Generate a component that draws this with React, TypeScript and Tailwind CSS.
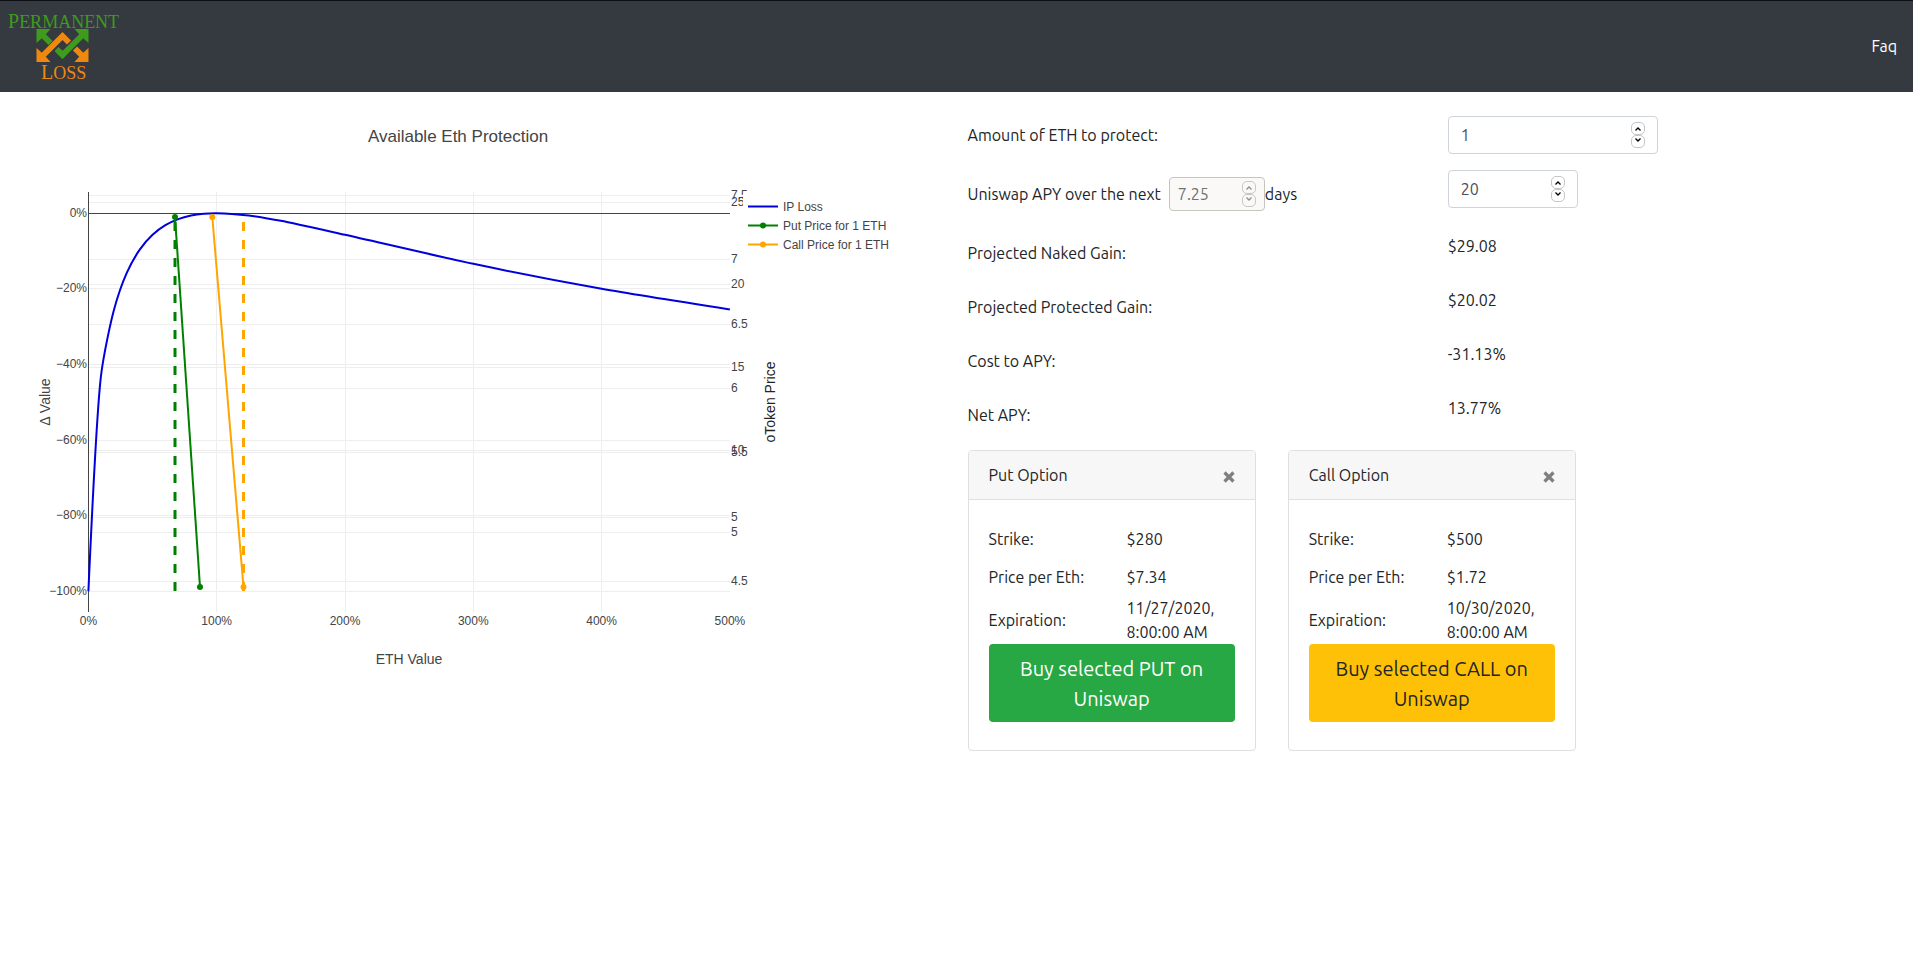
import { useState } from "react";

type Point = [number, number];

const PLOT = { left: 88, right: 730, top: 192, bottom: 612 };
const xAt = (ratio: number) => 88.4 + ratio * 128.3;
const yAt = (value: number) => 213.2 - value * 378;
const pixelCentre = (v: number) => Math.floor(v) + 0.5;

const LEFT_TICKS = [0, -0.2, -0.4, -0.6, -0.8, -1];
const BOTTOM_TICKS = [0, 1, 2, 3, 4, 5];
const PUT_TICKS = [
  { label: "7.5", y: 195 },
  { label: "7", y: 259 },
  { label: "6.5", y: 324 },
  { label: "6", y: 388 },
  { label: "5.5", y: 452 },
  { label: "5", y: 517 },
  { label: "4.5", y: 581 },
];
const CALL_TICKS = [
  { label: "25", y: 202 },
  { label: "20", y: 284 },
  { label: "15", y: 367 },
  { label: "10", y: 450 },
  { label: "5", y: 532 },
];

const LOSS_RATIOS = [0, 0.1, 0.2, 0.3, 0.4, 0.5, 0.6, 0.7, 0.8, 0.9, 1, 1.25, 1.5, 2, 3, 4, 5];
const LOSS_POINTS: Point[] = LOSS_RATIOS.map((r) => [xAt(r), yAt((2 * Math.sqrt(r)) / (1 + r) - 1)]);
const SMOOTHING = 0.7;

// Centripetal Catmull-Rom control points on either side of a vertex.
function tangents(prev: Point, here: Point, next: Point): [Point, Point] {
  const d1 = [prev[0] - here[0], prev[1] - here[1]];
  const d2 = [next[0] - here[0], next[1] - here[1]];
  const a = Math.pow(d1[0] * d1[0] + d1[1] * d1[1], 0.25);
  const b = Math.pow(d2[0] * d2[0] + d2[1] * d2[1], 0.25);
  const nx = (b * b * d1[0] - a * a * d2[0]) * SMOOTHING;
  const ny = (b * b * d1[1] - a * a * d2[1]) * SMOOTHING;
  const before = 3 * b * (a + b);
  const after = 3 * a * (a + b);
  return [
    [here[0] + nx / before, here[1] + ny / before],
    [here[0] - nx / after, here[1] - ny / after],
  ];
}

function smoothPath(pts: Point[]) {
  const t = pts.slice(1, -1).map((p, i) => tangents(pts[i], p, pts[i + 2]));
  let d = `M${pts[0]}Q${t[0][0]} ${pts[1]}`;
  for (let i = 1; i < t.length; i++) d += `C${t[i - 1][1]} ${t[i][0]} ${pts[i + 1]}`;
  return d + `Q${t[t.length - 1][1]} ${pts[pts.length - 1]}`;
}

const percent = (v: number) => `${v < 0 ? "−" : ""}${Math.round(Math.abs(v) * 100)}%`;

function Logo() {
  return (
    <svg viewBox="0 0 124 84" className="h-[84px] w-[124px]" role="img" aria-label="Permanent Loss">
      <g fontFamily="'Liberation Serif', serif">
        <text x="8" y="23" fontSize="20" fill="#3f9a1d">
          P<tspan fontSize="18">ERMANENT</tspan>
        </text>
        <text x="41" y="74" fontSize="20" fill="#ee880f">
          L<tspan fontSize="18">OSS</tspan>
        </text>
      </g>
      <g transform="translate(36.5 24)" fill="none" strokeLinejoin="miter">
        <path d="M5 5L26 26L47 5" stroke="#3f9a1d" strokeWidth="5.8" />
        <path d="M4 30L26 8L30 12" stroke="#343a40" strokeWidth="8.500" />
        <path d="M5 28L26 7L47 28" stroke="#ee880f" strokeWidth="5.8" />
        <path d="M29 23L45 7" stroke="#343a40" strokeWidth="8.500" />
        <path d="M22 22L26 26L47 5" stroke="#3f9a1d" strokeWidth="5.8" />
        <path d="M0 0H14L10 4.5L4.5 10L0 14Z" fill="#3f9a1d" />
        <path d="M52 0H38L42 4.5L47.500 10L52 14Z" fill="#3f9a1d" />
        <path d="M0 33H14L10 28.500L4.500 23L0 19Z" fill="#ee880f" />
        <path d="M52 33H38L42 28.500L47.500 23L52 19Z" fill="#ee880f" />
      </g>
    </svg>
  );
}

function ProtectionChart() {
  return (
    <svg
      viewBox="0 92 956 608"
      className="block w-full max-w-[956px]"
      fontFamily="'Liberation Sans', Arial, sans-serif"
      fontSize="12"
      fill="#444"
      role="img"
      aria-label="Available Eth Protection"
    >
      <text x="458" y="142" fontSize="17" textAnchor="middle">Available Eth Protection</text>

      <g stroke="#eee" strokeWidth="1" shapeRendering="crispEdges">
        {BOTTOM_TICKS.slice(1, 5).map((t) => (
          <line key={t} x1={pixelCentre(xAt(t))} x2={pixelCentre(xAt(t))} y1={PLOT.top} y2={PLOT.bottom} />
        ))}
        {[...LEFT_TICKS.slice(1).map(yAt), ...PUT_TICKS.map((t) => t.y), ...CALL_TICKS.map((t) => t.y)].map((y) => (
          <line key={y} x1={PLOT.left} x2={PLOT.right} y1={pixelCentre(y)} y2={pixelCentre(y)} />
        ))}
      </g>
      <rect x="88" y="192" width="1" height="420" />
      <rect x="88" y="213" width="642" height="1" />

      <path d={smoothPath(LOSS_POINTS)} fill="none" stroke="#0000dd" strokeWidth="2" />
      <path d="M175 591V213" stroke="#008000" strokeWidth="3" strokeDasharray="9 9" />
      <path d="M243.500 591V213" stroke="#ffa500" strokeWidth="3" strokeDasharray="9 9" />
      <path d="M175 217L200 587" stroke="#008000" strokeWidth="2" />
      <path d="M212.300 217L243.500 587" stroke="#ffa500" strokeWidth="2" />
      <g fill="#008000">
        <circle cx="175" cy="217" r="3" />
        <circle cx="200" cy="587" r="3" />
      </g>
      <g fill="#ffa500">
        <circle cx="212.300" cy="217" r="3" />
        <circle cx="243.500" cy="587" r="3" />
      </g>

      <g textAnchor="end">
        {LEFT_TICKS.map((t) => (
          <text key={t} x="87" y={Math.floor(yAt(t)) + 4}>{percent(t)}</text>
        ))}
      </g>
      <g textAnchor="middle">
        {BOTTOM_TICKS.map((t) => (
          <text key={t} x={xAt(t)} y="625">{percent(t)}</text>
        ))}
      </g>
      {[...PUT_TICKS, ...CALL_TICKS].map((t) => (
        <text key={t.y} x="731" y={t.y + 4}>{t.label}</text>
      ))}

      <g fontSize="14" textAnchor="middle">
        <text x="409" y="664">ETH Value</text>
        <text transform="translate(50 402) rotate(-90)">Δ Value</text>
        <text transform="translate(775 402) rotate(-90)" fill="#222">oToken Price</text>
      </g>

      <rect x="743" y="193" width="160" height="65" fill="#fff" />
      <path d="M748 206.500H778" stroke="#0000dd" strokeWidth="2" />
      <path d="M748 225.500H778" stroke="#008000" strokeWidth="2" />
      <path d="M748 244.500H778" stroke="#ffa500" strokeWidth="2" />
      <circle cx="763" cy="225.500" r="3" fill="#008000" />
      <circle cx="763" cy="244.500" r="3" fill="#ffa500" />
      <text x="783" y="211">IP Loss</text>
      <text x="783" y="230">Put Price for 1 ETH</text>
      <text x="783" y="249">Call Price for 1 ETH</text>
    </svg>
  );
}

function Spinner({ label, disabled, onStep }: { label: string; disabled?: boolean; onStep: (d: number) => void }) {
  const button = `flex h-[13px] w-[14px] items-center justify-center rounded-[5px] border border-[#c6c6c6] ${
    disabled ? "bg-[#faf9f8] text-[#8b8e8f]" : "bg-white text-black"
  }`;
  return (
    <div className="flex shrink-0 flex-col">
      <button type="button" className={button} disabled={disabled} aria-label={`Increase ${label}`} onClick={() => onStep(1)}>
        <svg viewBox="0 0 6 4" className="h-1 w-1.5" fill="none" stroke="currentColor" strokeWidth="1.3">
          <path d="M0.500 3.500L3 1L5.500 3.500" />
        </svg>
      </button>
      <button type="button" className={`${button} pb-[3px]`} disabled={disabled} aria-label={`Decrease ${label}`} onClick={() => onStep(-1)}>
        <svg viewBox="0 0 6 4" className="h-1 w-1.5" fill="none" stroke="currentColor" strokeWidth="1.3">
          <path d="M0.500 0.500L3 3L5.500 0.500" />
        </svg>
      </button>
    </div>
  );
}

function NumberField(props: { id: string; label: string; initial: number; disabled?: boolean; className: string }) {
  const [value, setValue] = useState(String(props.initial));
  return (
    <div className={`items-center rounded border ${props.className}`}>
      <input
        id={props.id}
        aria-label={props.label}
        type="number"
        value={value}
        disabled={props.disabled}
        onChange={(e) => setValue(e.target.value)}
        className="w-full min-w-0 flex-1 bg-transparent leading-6 outline-none [appearance:textfield] [&::-webkit-inner-spin-button]:appearance-none [&::-webkit-outer-spin-button]:appearance-none"
      />
      <Spinner label={props.label} disabled={props.disabled} onStep={(d) => setValue(String(Number(value) + d))} />
    </div>
  );
}

const RESULTS = [
  { label: "Projected Naked Gain:", value: "$29.08" },
  { label: "Projected Protected Gain:", value: "$20.02" },
  { label: "Cost to APY:", value: "-31.13%" },
  { label: "Net APY:", value: "13.77%" },
];

interface Option {
  title: string;
  strike: string;
  price: string;
  expiration: string;
  action: string;
  buttonClass: string;
}

const OPTIONS: Option[] = [
  {
    title: "Put Option",
    strike: "$280",
    price: "$7.34",
    expiration: "11/27/2020, 8:00:00 AM",
    action: "Buy selected PUT on Uniswap",
    buttonClass: "bg-[#28a745] text-white",
  },
  {
    title: "Call Option",
    strike: "$500",
    price: "$1.72",
    expiration: "10/30/2020, 8:00:00 AM",
    action: "Buy selected CALL on Uniswap",
    buttonClass: "bg-[#ffc107] text-[#212529]",
  },
];

function OptionCard({ option }: { option: Option }) {
  const rows = [
    ["Strike:", option.strike],
    ["Price per Eth:", option.price],
    ["Expiration:", option.expiration],
  ];
  return (
    <section className="overflow-hidden rounded border border-[#dfdfdf] bg-white">
      <header className="flex items-center justify-between border-b border-[#dfdfdf] bg-[#f7f7f7] px-5 py-3">
        <h2>{option.title}</h2>
        <button type="button" aria-label={`Remove ${option.title}`} className="pt-[3px] text-[#7f7f7f]">
          <svg viewBox="0 0 12 12" className="size-3" stroke="currentColor" strokeWidth="3.2">
            <path d="M1.500 1.500L10.500 10.500M10.500 1.500L1.500 10.500" />
          </svg>
        </button>
      </header>
      <div className="px-5 pt-5 pb-7">
        <dl>
          {rows.map(([label, value], i) => (
            <div key={label} className={`grid grid-cols-2 items-center gap-x-[30px] ${i < 2 ? "py-[7px]" : ""}`}>
              <dt>{label}</dt>
              <dd>{value}</dd>
            </div>
          ))}
        </dl>
        <button type="button" className={`w-full rounded px-4 pt-[10px] pb-2 text-xl leading-[30px] ${option.buttonClass}`}>
          {option.action}
        </button>
      </div>
    </section>
  );
}

export default function App() {
  return (
    <div className="min-h-screen bg-white font-['Ubuntu','Noto_Sans',sans-serif] text-base leading-6 text-[#212529]">
      <nav className="flex h-[92px] items-center justify-between border-t border-[#0c0f16] bg-[#343a40] pr-4">
        <a href="#home">
          <Logo />
        </a>
        <a href="#faq" className="pb-[2px] text-white">
          Faq
        </a>
      </nav>
      <main className="grid grid-cols-2">
        <ProtectionChart />
        <div className="pt-6 pr-[17px] pl-[11px]">
          <div className="grid grid-cols-2 gap-x-8">
            <div>
              <div className="mb-4 py-[7px]">
                <label htmlFor="amount">Amount of ETH to protect:</label>
              </div>
              <div className="mb-4 flex items-center py-[7px]">
                <label htmlFor="apy" className="pr-2">
                  Uniswap APY over the next
                </label>
                <NumberField
                  id="apy"
                  label="Uniswap APY"
                  initial={7.25}
                  disabled
                  className="inline-flex h-[34px] w-24 border-[#c5c5c0] bg-[#faf9f8] px-2 text-[#6f7273]"
                />
                <label htmlFor="days">days</label>
              </div>
              {RESULTS.map((r) => (
                <div key={r.label} className="mb-4 py-[7px]">
                  {r.label}
                </div>
              ))}
            </div>
            <div>
              <NumberField
                id="amount"
                label="Amount of ETH to protect"
                initial={1}
                className="mb-4 flex h-[38px] w-[210px] border-[#ced4da] px-3 text-[#495057]"
              />
              <NumberField
                id="days"
                label="Days"
                initial={20}
                className="mb-4 flex h-[38px] w-[130px] border-[#ced4da] px-3 text-[#495057]"
              />
              {RESULTS.map((r) => (
                <div key={r.label} className="mb-4 pt-[10px] pb-1">
                  {r.value}
                </div>
              ))}
            </div>
          </div>
          <div className="grid grid-cols-3 gap-x-8">
            {OPTIONS.map((o) => (
              <OptionCard key={o.title} option={o} />
            ))}
          </div>
        </div>
      </main>
    </div>
  );
}
